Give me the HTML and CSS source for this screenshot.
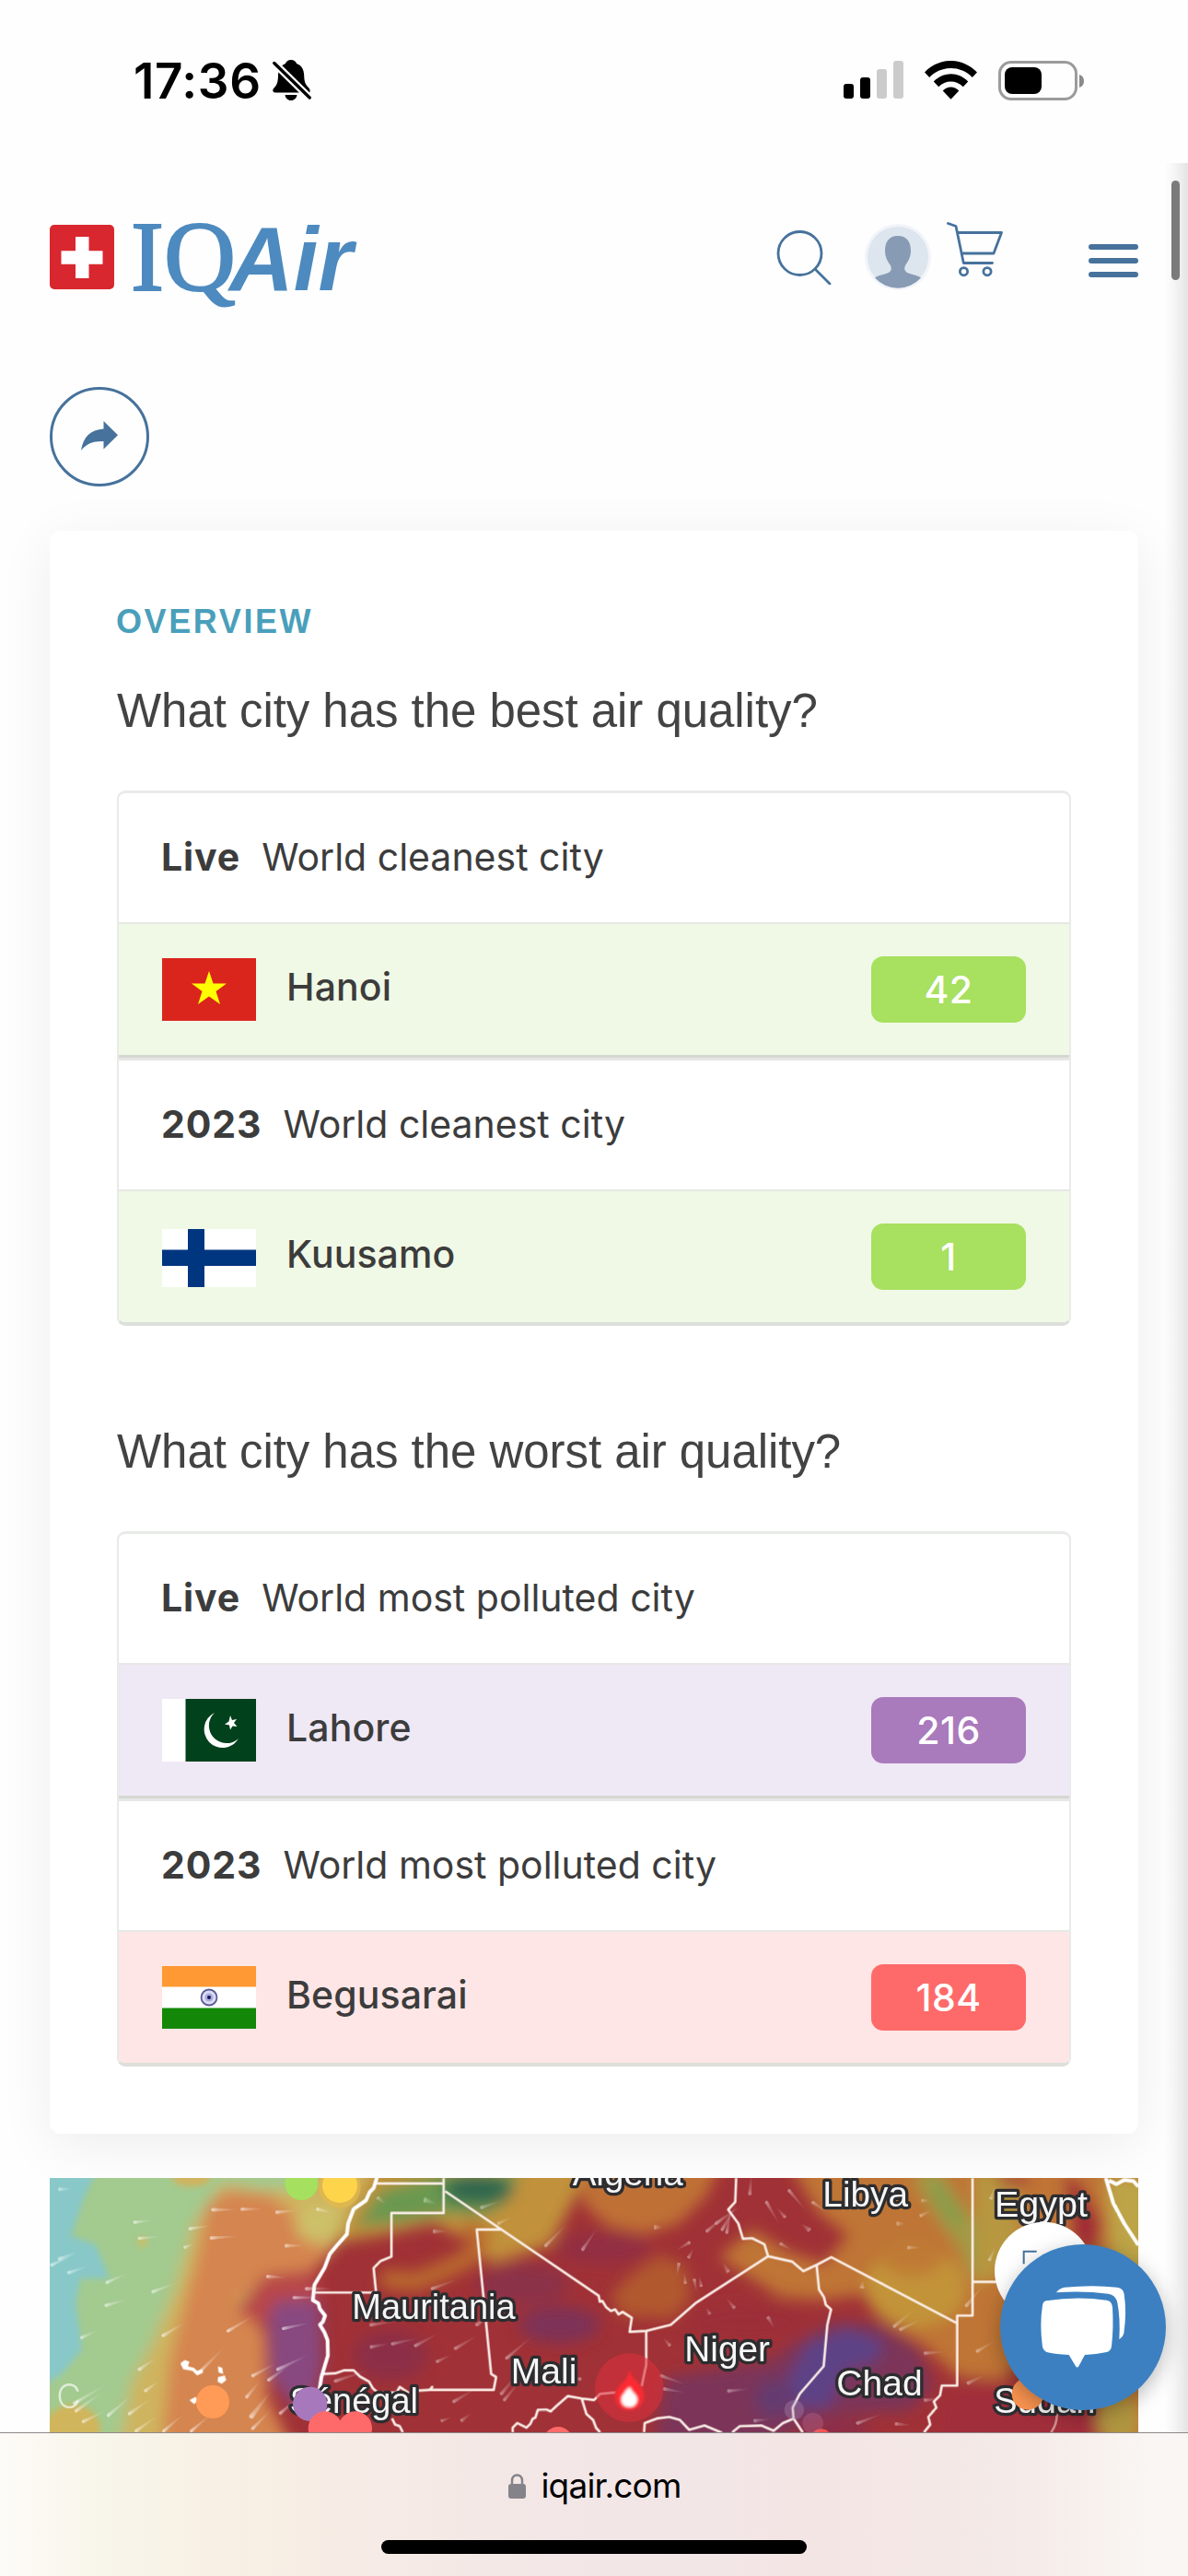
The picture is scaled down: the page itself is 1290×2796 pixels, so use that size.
FILE: index.html
```html
<!DOCTYPE html>
<html lang="en">
<head>
<meta charset="utf-8">
<title>IQAir</title>
<link rel="stylesheet" href="styles.css">
</head>
<body>
<div class="screen">
  <header class="status">
    <div class="status-left">
      <span class="clock">17:36</span>
      <svg class="bell" viewBox="0 0 42 44" width="42" height="44">
        <path d="M20 0c3.300 0 5.500 1.700 6 4 6 2 8 7 8.200 13 .2 8 2 10 4.800 13 1.600 1.800 2 3.500 1.200 5.500H3C0 35.500-.6 32.500 1.500 30.500 5 27 5.800 24 6 17c.2-6 2.500-11 8-13 .6-2.300 2.700-4 6-4zM13.500 38h13c-.4 3.600-3 6-6.500 6s-6.100-2.400-6.500-6z"/>
        <path d="M2 3.500 40 41" stroke="#fff" stroke-width="8"/>
        <path d="M1.800 3.500 40.200 41" stroke="#000" stroke-width="3.400" stroke-linecap="round"/>
      </svg>
    </div>
    <div class="status-right">
      <svg viewBox="0 0 65 42" width="65" height="42">
        <rect y="25" width="11" height="16" rx="3"/><rect x="18" y="18" width="11" height="23" rx="3"/>
        <rect x="36" y="9" width="11" height="32" rx="3" fill="#cbcbcb"/><rect x="54" width="11" height="41" rx="3" fill="#cbcbcb"/>
      </svg>
      <svg viewBox="0 0 57 42" width="57" height="42">
        <path d="M0 12.500C16-4.200 41-4.200 57 12.500L51.800 18C39 4.800 18 4.800 5.200 18z"/>
        <path d="M9.800 22.500C20 11.500 37 11.500 47.200 22.500L41.800 28.300C34.500 20.500 22.500 20.500 15.200 28.300z"/>
        <path d="M19.700 32.600C25 27.200 32 27.200 37.300 32.600L28.500 41.800z"/>
      </svg>
      <svg viewBox="0 0 94 43" width="94" height="43">
        <rect x="1.500" y="1.500" width="83" height="40" rx="12.500" fill="none" stroke="#9b9b9b" stroke-width="3"/>
        <rect x="7" y="7" width="40" height="29" rx="8"/>
        <path d="M88 15c3.300 1 5 3.500 5 7s-1.700 6-5 7z" fill="#8a8a8a"/>
      </svg>
    </div>
  </header>

  <nav class="nav">
    <svg class="logo" viewBox="0 0 340 100" width="340" height="100">
      <rect y="4" width="70" height="70" rx="5" fill="#d8272f"/>
      <path d="M28 17h14.500v15.300H57.500v14.400H42.500V62H28V46.700H12.500V32.300H28z" fill="#fff"/>
      <g fill="#4d8abf">
        <text class="logo-serif" x="88" y="75" textLength="114" lengthAdjust="spacingAndGlyphs">IQ</text>
        <text class="logo-sans" x="195" y="75" textLength="134" lengthAdjust="spacingAndGlyphs">Air</text>
      </g>
    </svg>
    <div class="nav-icons">
      <svg class="i-search" viewBox="0 0 60 60" width="60" height="60" fill="none" stroke="#46729c" stroke-width="2.800" stroke-linecap="round">
        <circle cx="25.500" cy="26" r="23.500"/><path d="M42 43 58 59"/>
      </svg>
      <svg class="i-user" viewBox="0 0 72 72" width="72" height="72">
        <circle cx="36" cy="36" r="36" fill="#f1f4f9"/><circle cx="36" cy="36" r="33" fill="#dde5ee"/>
        <path d="M36 13c9 0 14 6 14 16 0 7-3 12-6 16-2 5 0 7 3.500 8.500 6 2 9 2 13.500 5A33.500 33.500 0 0 1 11 58.500c4.500-3 7.500-3 13.500-5C28 52 30 50 28 45c-3-4-6-9-6-16 0-10 5-16 14-16z" fill="#879bb5"/>
      </svg>
      <svg class="i-cart" viewBox="0 0 62 62" width="62" height="62" fill="none" stroke="#46729c" stroke-width="2.800" stroke-linecap="round" stroke-linejoin="round">
        <path d="M1.500 2.500 10 5.500l8.300 40H49.500M12 12.500H59.500L51 35H16"/>
        <circle cx="18.500" cy="54.700" r="4.100"/><circle cx="44" cy="54.700" r="4.100"/>
      </svg>
      <svg class="i-menu" viewBox="0 0 54 36" width="54" height="36" fill="#46729c">
        <rect width="54" height="6" rx="3"/><rect y="15" width="54" height="6" rx="3"/><rect y="30" width="54" height="6" rx="3"/>
      </svg>
    </div>
  </nav>

  <div class="share-row">
    <div class="share">
      <svg viewBox="0 0 40 32" width="40" height="32"><path d="M24.500 0 40 15.200 24.500 30.500V22C14 21.500 6 24 0 32 2.500 17 10 9.500 24.500 8.500z" fill="#46729c"/></svg>
    </div>
  </div>

  <main class="card">
    <div class="eyebrow">OVERVIEW</div>
    <h2 class="q q-best">What city has the best air quality?</h2>
    <section class="table">
      <div class="head"><b>Live</b><span>World cleanest city</span></div>
      <div class="city good">
        <svg class="flag" viewBox="0 0 102 68" width="102" height="68"><rect width="102" height="68" fill="#da251d"/><path d="M51 14l4.500 13.500H70L58.500 36 63 50 51 41.500 39 50l4.500-14L32 27.500h14.500z" fill="#ff0"/></svg>
        <span class="name">Hanoi</span><span class="aqi">42</span>
      </div>
      <div class="rule"></div>
      <div class="head"><b>2023</b><span>World cleanest city</span></div>
      <div class="city good">
        <svg class="flag low" viewBox="0 0 102 63" width="102" height="63"><rect width="102" height="63" fill="#fff"/><path d="M28 0h18v63H28zM0 22.500h102v17.500H0z" fill="#003580"/></svg>
        <span class="name">Kuusamo</span><span class="aqi">1</span>
      </div>
    </section>
    <h2 class="q q-worst">What city has the worst air quality?</h2>
    <section class="table">
      <div class="head"><b>Live</b><span>World most polluted city</span></div>
      <div class="city very">
        <svg class="flag" viewBox="0 0 102 68" width="102" height="68"><rect width="102" height="68" fill="#fff"/><rect x="25.500" width="76.500" height="68" fill="#01411c"/><path d="M57 15A20 20 0 1 0 83 43 19 19 0 1 1 57 15z" fill="#fff"/><path d="M74 18l2 5 5-1-3 4 3.500 4-5-.5-2.500 4-1-5-5-1 4.500-3z" fill="#fff"/></svg>
        <span class="name">Lahore</span><span class="aqi">216</span>
      </div>
      <div class="rule"></div>
      <div class="head"><b>2023</b><span>World most polluted city</span></div>
      <div class="city bad">
        <svg class="flag" viewBox="0 0 102 68" width="102" height="68"><rect width="102" height="68" fill="#fff"/><rect width="102" height="22.500" fill="#f93"/><rect y="45.500" width="102" height="22.500" fill="#138808"/><circle cx="51" cy="34" r="8.500" fill="#dcdcf2" stroke="#5a5a98" stroke-width="1.800"/><circle cx="51" cy="34" r="4.500" fill="#a9a9dc"/><circle cx="51" cy="34" r="2" fill="#15155c"/></svg>
        <span class="name">Begusarai</span><span class="aqi">184</span>
      </div>
    </section>
  </main>

  <section class="map">
    <svg viewBox="0 42 3546 828" width="1182" height="276">
      <defs>
        <filter id="soft" x="-20%" y="-20%" width="140%" height="140%"><feGaussianBlur stdDeviation="24"/></filter>
        <filter id="edge" x="-20%" y="-20%" width="140%" height="140%"><feGaussianBlur stdDeviation="9"/></filter>
        <filter id="glow" x="-20%" y="-20%" width="140%" height="140%"><feGaussianBlur stdDeviation="4"/></filter>
        <linearGradient id="tail"><stop offset="0" stop-color="#fff" stop-opacity=".75"/><stop offset=".25" stop-color="#fff" stop-opacity=".4"/><stop offset="1" stop-color="#fff" stop-opacity="0"/></linearGradient>
        <path id="s" d="M0-5Q-8 0 0 6L90 1V-1z" fill="url(#tail)"/>
      </defs>
      <rect y="42" width="3546" height="828" fill="#a03136"/>
      <g filter="url(#soft)">
        <path d="M-60-20H1120L1000 180 900 300 850 350 680 380 610 470 700 560 700 780 800 940H-60z" fill="#cfb45f"/>
        <path d="M580 80 720 95 810 170 910 270 850 360 675 380 600 450 700 540 710 760 800 940H360L390 640 430 480 480 300 510 130z" fill="#d5854f"/>
        <path d="M-60-20H880L820 80 690 80 560 60 470 190 410 400 330 590 270 700 220 940H-60z" fill="#a3ca8f"/>
        <ellipse cx="880" cy="190" rx="80" ry="65" fill="#cdc069"/>
        <path d="M710 450 800 410 880 450 890 640 870 740 790 790 720 690z" fill="#884a80"/>
        <path d="M700 360 860 340 880 440 740 440 700 520 610 480z" fill="#b8464a"/>
        <path d="M920 255 1010 90 1060-20H1780L1700 130 1630 260 1540 290 1440 320 1370 250 1250 190 1100 225z" fill="#c1913a"/>
        <path d="M990 200 1080 80 1300 20H1530L1500 110 1420 165 1300 160 1120 190z" fill="#6a984f"/>
        <ellipse cx="1395" cy="80" rx="115" ry="50" fill="#33684e"/>
        <path d="M1080 370 1190 380 1290 340 1370 300 1400 240 1350 200" fill="none" stroke="#b9682f" stroke-width="62"/>
        <path d="M1720-20H2190L2140 100 2050 190 1940 225 1820 200 1740 130z" fill="#bf7034"/>
        <path d="M1900 350 1990 290 2070 330 2090 430 2030 500 1860 490 1830 420z" fill="#b1592f"/>
        <ellipse cx="1540" cy="390" rx="150" ry="65" fill="#8b304a"/>
        <ellipse cx="1660" cy="520" rx="130" ry="60" fill="#7e3256"/>
        <ellipse cx="1110" cy="620" rx="120" ry="80" fill="#8c2d47"/>
        <ellipse cx="1800" cy="270" rx="150" ry="50" fill="#922e42"/>
        <path d="M2180 300 2290 210 2400 280 2520 320 2600 230 2500 150 2400-20H3600V940H3440L3400 720 3240 600 3100 700 2960 690 2850 590 2720 510 2660 420 2520 440 2380 430z" fill="#bf7434"/>
        <ellipse cx="2820" cy="400" rx="165" ry="130" fill="#c29339"/>
        <ellipse cx="2810" cy="300" rx="100" ry="60" fill="#bf7a35"/>
        <path d="M2850 20 2930 150 3010 260 3040 350" fill="none" stroke="#a29a45" stroke-width="90"/>
        <path d="M2880 60 2960 190" fill="none" stroke="#869c4b" stroke-width="50"/>
        <path d="M3010 20H3160V300L3020 400z" fill="#b7973f"/>
        <path d="M3300 30 3360 60 3430 190 3400 300 3330 250 3320 130z" fill="#a22935"/>
        <ellipse cx="3140" cy="50" rx="55" ry="22" fill="#a83a34"/>
        <path d="M3440 40H3600V340H3460z" fill="#bda447"/>
        <path d="M2900 780 2990 710 3150 710 3330 680 3420 800 3400 940H2880z" fill="#a12f3a"/>
        <ellipse cx="3480" cy="830" rx="70" ry="90" fill="#b0963f"/>
        <path d="M2010 690 2200 660 2340 640 2440 570 2560 510 2700 520 2830 600 2880 720 2800 800 2500 820 2300 940H1960z" fill="#7b3458"/>
        <path d="M2400 700 2470 580 2600 530 2720 580 2690 640 2590 670 2540 790 2440 790z" fill="#5d4386"/>
        <ellipse cx="2360" cy="760" rx="60" ry="60" fill="#643a70"/>
        <ellipse cx="2550" cy="860" rx="130" ry="35" fill="#8c2f48"/>
        <ellipse cx="2270" cy="510" rx="200" ry="60" fill="#9c2d38"/>
      </g>
      <g filter="url(#edge)">
        <path d="M-60-20H170L110 110 70 230 150 260 195 370 100 370 85 450 105 600 40 680-60 740z" fill="#88c8c8"/>
        <ellipse cx="75" cy="860" rx="90" ry="80" fill="#d1b55c"/>
        <ellipse cx="462" cy="42" rx="62" ry="28" fill="#d1b35e"/>
        <circle cx="302" cy="250" r="16" fill="#c9bd65"/>
      </g>
      <g opacity=".85">
        <use href="#s" transform="translate(30 78) scale(.5 1)"/><use href="#s" transform="translate(275 186) rotate(-6) scale(.7 1)"/>
        <use href="#s" transform="translate(290 238) rotate(-4) scale(.8 1)"/><use href="#s" transform="translate(455 207) rotate(-8) scale(.8 1)"/>
        <use href="#s" transform="translate(438 268) rotate(-20) scale(.4 1)"/><use href="#s" transform="translate(530 145)"/>
        <use href="#s" transform="translate(625 143) scale(.8 1)"/><use href="#s" transform="translate(738 153) rotate(-5) scale(.8 1)"/>
        <use href="#s" transform="translate(870 142) rotate(15) scale(.6 1)"/><use href="#s" transform="translate(525 237) rotate(-3)"/>
        <use href="#s" transform="translate(768 262) scale(.7 1)"/><use href="#s" transform="translate(708 362) rotate(4) scale(.7 1)"/>
        <use href="#s" transform="translate(5 325) rotate(-25)"/><use href="#s" transform="translate(60 350) rotate(-18) scale(.8 1)"/>
        <use href="#s" transform="translate(30 305) rotate(-20) scale(.8 1)"/><use href="#s" transform="translate(185 382) rotate(-24) scale(.9 1)"/>
        <use href="#s" transform="translate(335 412) rotate(-20) scale(.9 1)"/><use href="#s" transform="translate(182 457) rotate(-16) scale(.9 1)"/>
        <use href="#s" transform="translate(102 562) rotate(-24) scale(.7 1)"/><use href="#s" transform="translate(368 555) rotate(-30)"/>
        <use href="#s" transform="translate(580 540) rotate(-30) scale(1.100 1)"/><use href="#s" transform="translate(290 666) rotate(-34) scale(.8 1)"/>
        <use href="#s" transform="translate(310 735) rotate(-35) scale(.7 1)"/><use href="#s" transform="translate(490 672) rotate(-45) scale(1.300 1)"/>
        <use href="#s" transform="translate(760 532) rotate(-12)"/><use href="#s" transform="translate(795 431)"/><use href="#s" transform="translate(835 402)"/>
        <use href="#s" transform="translate(660 686) rotate(-28)"/><use href="#s" transform="translate(742 665) rotate(-25) scale(1.300 1)"/>
        <use href="#s" transform="translate(712 700) rotate(-35)"/><use href="#s" transform="translate(640 756) rotate(-50) scale(.8 1)"/>
        <use href="#s" transform="translate(655 820) rotate(-52) scale(1.200 1.400)"/><use href="#s" transform="translate(750 808) rotate(-40)"/>
        <use href="#s" transform="translate(80 775) rotate(-30) scale(1.500 1)"/><use href="#s" transform="translate(85 800) rotate(-35) scale(1.300 1)"/>
        <use href="#s" transform="translate(190 815) rotate(-40) scale(1.200 1)"/><use href="#s" transform="translate(258 810) rotate(-35)"/>
        <use href="#s" transform="translate(108 835) rotate(-25)"/><use href="#s" transform="translate(280 866) rotate(-35)"/>
        <use href="#s" transform="translate(460 866) rotate(-40)"/><use href="#s" transform="translate(370 866) rotate(-40)"/><use href="#s" transform="translate(660 858) rotate(-45)"/>
      </g>
      <g opacity=".6">
        <use href="#s" transform="translate(1045 520) rotate(-8)"/><use href="#s" transform="translate(1045 592) rotate(-10) scale(.7 1)"/>
        <use href="#s" transform="translate(1115 582) rotate(-12)"/><use href="#s" transform="translate(1190 588) rotate(-28)"/>
        <use href="#s" transform="translate(930 703) rotate(-18) scale(1.300 1)"/><use href="#s" transform="translate(1320 597) rotate(-30)"/>
        <use href="#s" transform="translate(1260 640) rotate(-25) scale(.6 1)"/><use href="#s" transform="translate(1488 628) rotate(-40) scale(1.300 1)"/>
        <use href="#s" transform="translate(1315 770) rotate(-30)"/><use href="#s" transform="translate(1470 745) rotate(-50)"/><use href="#s" transform="translate(1480 765) rotate(-50)"/>
        <use href="#s" transform="translate(1275 833) rotate(-20) scale(.4 1)"/><use href="#s" transform="translate(1340 832) rotate(-35) scale(.5 1)"/>
        <use href="#s" transform="translate(1615 262) rotate(-45) scale(1.200 1)"/><use href="#s" transform="translate(1735 275) rotate(-55)"/>
        <use href="#s" transform="translate(1390 520) rotate(-35)"/><use href="#s" transform="translate(1245 402) rotate(-20)"/><use href="#s" transform="translate(1250 215) scale(.5 1.200)"/>
        <use href="#s" transform="translate(1220 112) rotate(20) scale(.5 1.500)"/><use href="#s" transform="translate(1405 138) rotate(-18) scale(.8 1)"/><use href="#s" transform="translate(1460 190) rotate(-25) scale(.6 1)"/>
        <use href="#s" transform="translate(1068 105) rotate(40) scale(.4 1)"/><use href="#s" transform="translate(1970 202) scale(.3 1.400)"/>
        <use href="#s" transform="translate(2205 220) rotate(-80)"/><use href="#s" transform="translate(2170 190) rotate(-35) scale(1.200 1)"/><use href="#s" transform="translate(2140 215) rotate(-40)"/>
        <use href="#s" transform="translate(2190 210) rotate(-60) scale(1.200 1)"/><use href="#s" transform="translate(2280 95) rotate(-85) scale(.8 1)"/>
        <use href="#s" transform="translate(2085 252) rotate(150) scale(.6 1)"/><use href="#s" transform="translate(2050 320) rotate(100) scale(.5 1)"/><use href="#s" transform="translate(2080 302) rotate(-60) scale(.4 1)"/>
        <use href="#s" transform="translate(2070 385) rotate(-95) scale(.4 1)"/><use href="#s" transform="translate(2100 372) rotate(80) scale(.5 1)"/><use href="#s" transform="translate(2122 395) rotate(-100) scale(.4 1)"/>
        <use href="#s" transform="translate(2210 348) rotate(-120) scale(.4 1.200)"/><use href="#s" transform="translate(2230 465) rotate(-130) scale(.5 1)"/><use href="#s" transform="translate(2150 485) rotate(-120) scale(.3 1)"/>
        <use href="#s" transform="translate(2340 495) rotate(60) scale(.5 1)"/><use href="#s" transform="translate(2020 588) rotate(-130) scale(.4 1)"/><use href="#s" transform="translate(1990 685) rotate(20)"/>
        <use href="#s" transform="translate(2000 728) rotate(10) scale(.8 1)"/><use href="#s" transform="translate(2210 735) rotate(-5) scale(.8 1)"/><use href="#s" transform="translate(1730 697) rotate(180) scale(.5 1)"/>
        <use href="#s" transform="translate(2335 120) rotate(60)"/><use href="#s" transform="translate(2408 82) rotate(50)"/><use href="#s" transform="translate(2485 120) rotate(35) scale(.7 1)"/><use href="#s" transform="translate(2395 170) rotate(-130) scale(.5 1)"/>
        <use href="#s" transform="translate(2475 213) rotate(-140) scale(.4 1.400)"/><use href="#s" transform="translate(2380 255) rotate(30) scale(.5 1)"/><use href="#s" transform="translate(2760 190) scale(.3 1.300)"/>
        <use href="#s" transform="translate(2835 165) rotate(-25) scale(.5 1)"/><use href="#s" transform="translate(2840 115) scale(.3 1)"/><use href="#s" transform="translate(2795 268) scale(.5 1)"/>
        <use href="#s" transform="translate(2750 525) rotate(-40)"/><use href="#s" transform="translate(2770 535) rotate(-25) scale(.9 1)"/><use href="#s" transform="translate(2645 400) rotate(-80) scale(.3 1.300)"/>
        <use href="#s" transform="translate(2850 612) rotate(-4) scale(.8 1)"/><use href="#s" transform="translate(3020 606) rotate(-30) scale(.8 1)"/><use href="#s" transform="translate(2990 710) rotate(-25) scale(.7 1)"/>
        <use href="#s" transform="translate(2985 458) rotate(-50)"/><use href="#s" transform="translate(3060 310) rotate(-65) scale(.6 1)"/><use href="#s" transform="translate(3065 110) rotate(-70) scale(.5 1)"/>
        <use href="#s" transform="translate(2630 840) rotate(-20)"/><use href="#s" transform="translate(2755 842) rotate(5) scale(.6 1)"/><use href="#s" transform="translate(2850 765) rotate(-5) scale(.6 1)"/><use href="#s" transform="translate(2295 832) rotate(-5) scale(.6 1)"/>
      </g>
      <g fill="none" stroke="#fbeee8" stroke-width="8" stroke-linejoin="round">
        <path d="M1065 60H1283M1283 42V156H1113V298L1078 312 1055 335 1063 415H865"/>
        <path d="M1288 85 1788 425 1792 445 1800 442 1812 462 1828 475 1842 470 1853 486 1866 478 1896 497 1889 543 1943 540 2023 520 2103 450 2340 297 2418 314 2455 345 2498 325 2546 300 2956 515V490H3006V42M3006 380H3100"/>
        <path d="M1473 210H1391L1438 680 1454 690 1446 732H1240L1200 734"/>
        <path d="M2236 42 2233 120 2210 145 2243 190 2258 240 2288 238 2328 258 2340 297"/>
        <path d="M1943 540V650L1928 720M1843 740 1793 745 1773 765 1733 760 1688 752 1650 785 1632 802 1618 796 1590 797 1582 822 1573 826 1566 842 1553 855 1523 840 1508 855V870M1733 760 1748 810 1770 830 1780 856 1793 870"/>
        <path d="M1936 870 1938 840 1978 825 2018 820 2053 830 2083 862 2133 848 2190 872M2223 870 2248 850 2318 848 2358 865 2388 840 2423 825"/>
        <path d="M2498 325 2506 405 2522 430 2528 455 2545 470 2533 520 2521 655 2443 745 2420 790 2423 825 2453 870M2956 515V718H2906L2900 750 2880 770 2888 790 2862 820 2868 845 2848 870"/>
        <path d="M888 680 930 678 960 668 990 668 1010 688 1040 705 1052 726 1070 742 1130 740 1140 722 1170 742M1115 825 1125 845 1140 850 1150 870M1238 732 1248 720"/>
        <path d="M3280 800Q3285 840 3262 870" opacity=".5"/>
      </g>
      <g fill="none" stroke="#fff" stroke-width="12" stroke-linejoin="round">
        <path d="M1066 40 1055 75 1042 88 1030 115 990 143 972 190 968 225 935 262 912 290 895 335 880 360 862 390 857 440 875 450 880 468 897 490 890 510 880 520 895 545 905 570 906 620 885 690 877 740"/>
        <path d="M3440 42 3465 125 3500 190 3546 260M3450 50 3475 62 3500 48 3530 52 3546 70"/>
      </g>
      <path d="M425 645 440 635 455 640 450 655 470 660 480 670 495 665 500 675 480 685 465 670 435 665zM548 655 562 660 565 680 550 675zM548 690 570 685 575 700 560 712 547 705zM455 765 475 755 485 765 470 778z" fill="#fff"/>
      <g class="dots">
        <circle cx="945" cy="72" r="68" fill="#e3b94c" opacity=".7"/>
        <circle cx="820" cy="60" r="54" fill="#a5e05f"/><circle cx="945" cy="66" r="57" fill="#fed44b"/>
        <circle cx="531" cy="771" r="54" fill="#ff9b57"/>
        <circle cx="1656" cy="900" r="48" fill="#fe6a69"/><circle cx="2513" cy="893" r="34" fill="#f7534f"/>
        <circle cx="2425" cy="797" r="32" fill="#a58bb8" opacity=".35"/><circle cx="2486" cy="840" r="34" fill="#c7789c" opacity=".3"/>
      </g>
      <g class="labels">
        <text x="985" y="500" textLength="532" lengthAdjust="spacingAndGlyphs">Mauritania</text>
        <text x="782" y="808" textLength="418" lengthAdjust="spacingAndGlyphs">Sénégal</text>
        <text x="1502" y="710" textLength="215" lengthAdjust="spacingAndGlyphs">Mali</text>
        <text x="2068" y="638" textLength="278" lengthAdjust="spacingAndGlyphs">Niger</text>
        <text x="1703" y="66" textLength="360" lengthAdjust="spacingAndGlyphs">Algeria</text>
        <text x="2518" y="135" textLength="278" lengthAdjust="spacingAndGlyphs">Libya</text>
        <text x="3078" y="168" textLength="303" lengthAdjust="spacingAndGlyphs">Egypt</text>
        <text x="2563" y="750" textLength="280" lengthAdjust="spacingAndGlyphs">Chad</text>
        <text x="3076" y="808" textLength="330" lengthAdjust="spacingAndGlyphs">Sudan</text>
      </g>
      <text class="faint" x="22" y="792">C</text>
      <circle cx="848" cy="778" r="56" fill="#a878bd"/>
      <circle cx="897" cy="857" r="55" fill="#fe6a69"/><circle cx="995" cy="857" r="55" fill="#fe6a69"/>
      <circle cx="3186" cy="745" r="52" fill="#fa9450"/>
      <circle cx="1888" cy="725" r="112" fill="#d8303c" opacity=".6"/>
      <g filter="url(#glow)">
        <path d="M1888 665C1896 700 1937 715 1935 752 1932 785 1912 798 1888 798S1844 785 1842 752C1842 730 1858 722 1862 712 1872 705 1884 695 1888 665z" fill="#fb2b33"/>
        <path d="M1890 722C1894 740 1915 745 1914 765 1912 780 1903 788 1888 788S1862 780 1862 763C1862 750 1872 745 1876 735z" fill="#fff"/>
      </g>
      <circle cx="3238" cy="345" r="160" fill="#fff"/>
      <path d="M3173 322V281H3215" fill="none" stroke="#46729c" stroke-width="6"/>
    </svg>
  </section>

  <footer class="browser">
    <div class="address">
      <svg viewBox="0 0 19 27" width="19" height="27"><path d="M4 12V7.500C4 4 6.200 1.500 9.500 1.500S15 4 15 7.500V12" fill="none" stroke="#85838a" stroke-width="2.500"/><rect y="11" width="19" height="16" rx="3" fill="#85838a"/></svg>
      <span>iqair.com</span>
    </div>
    <div class="home"></div>
  </footer>

  <div class="edge"></div>
  <div class="scroll"></div>
  <div class="chat">
    <svg viewBox="738 258 540 540" width="180" height="180">
      <path d="M888 442Q988 426 1085 440 1102 443 1104 462 1108 530 1101 590 1099 605 1085 609 1050 616 1014 618L994 655Q989 662 984 655L962 618Q920 616 893 610 879 606 876 592 866 520 876 457 878 444 888 442z" fill="#fff"/>
      <path d="M921 415Q930 401 948 398 1040 389 1118 398 1140 401 1142 420 1151 480 1141 548 1138 560 1126 568 1130 500 1120 448 1115 423 1090 419 1010 409 921 415z" fill="#fff"/>
    </svg>
  </div>
</div>
</body>
</html>
```
FILE: styles.css
```css
* { box-sizing: border-box; }
body { margin: 0; background: #fdfdfd; }
svg { display: block; flex: none; }

.screen {
  position: relative;
  width: 1290px;
  height: 2796px;
  overflow: hidden;
  display: flex;
  flex-direction: column;
  background: #fefefe;
  font-family: Inter, "Liberation Sans", sans-serif;
  color: #3c3c3c;
}

/* status bar */
.status {
  height: 177px;
  flex: none;
  display: flex;
  justify-content: space-between;
  align-items: flex-start;
  padding: 65px 112px 0 145px;
}
.status-left { display: flex; align-items: flex-start; gap: 12px; }
.clock { width: 139px; font-size: 53px; font-weight: 600; line-height: 46px; letter-spacing: .6px; color: #000; white-space: nowrap; }
.status-right { display: flex; gap: 23px; padding-top: 1px; }

/* site navigation */
.nav {
  height: 243px;
  flex: none;
  display: flex;
  justify-content: space-between;
  align-items: flex-start;
  padding: 63px 54px 0;
}
.logo { overflow: visible; }
.logo-serif { font-family: "Liberation Serif", serif; font-size: 109px; stroke: #4d8abf; stroke-width: 2px; }
.logo-sans { font-family: "Liberation Sans", sans-serif; font-size: 99px; font-weight: 700; font-style: italic; }
.nav-icons { display: flex; align-items: flex-start; }
.i-search { margin: 9px 36px 0 0; }
.i-user { margin: 3px 17px 0 0; }
.i-cart { margin-right: 92px; }
.i-menu { margin-top: 25px; }

.share-row { height: 156px; flex: none; padding: 0 54px; }
.share {
  width: 108px;
  height: 108px;
  padding-bottom: 3px;
  border: 3px solid #46729c;
  border-radius: 50%;
  display: flex;
  align-items: center;
  justify-content: center;
}

/* overview card */
.card {
  height: 1740px;
  flex: none;
  margin: 0 54px;
  padding: 79px 73px 0;
  background: #fff;
  border-radius: 12px;
  box-shadow: 0 12px 60px rgba(0, 0, 0, .07);
}
.eyebrow {
  height: 40px;
  margin-left: -1px;
  font: 700 36px/40px "Liberation Sans", sans-serif;
  letter-spacing: 2.6px;
  color: #4a9fbb;
}
.q {
  height: 60px;
  font: 400 51px/60px "Liberation Sans", sans-serif;
  letter-spacing: -.05px;
  color: #434343;
  white-space: nowrap;
}
.q-best { margin: 47px 0 56px; }
.q-worst { margin: 107px 0 56px; }

.table {
  width: 1036px;
  border: 2px solid #e9ebe8;
  border-top-width: 3px;
  border-bottom: 4px solid #dddfdb;
  border-radius: 9px;
  overflow: hidden;
}
.head {
  height: 140px;
  padding: 0 46px 3px;
  display: flex;
  align-items: center;
  gap: 23px;
  font-size: 41px;
  line-height: 50px;
}
.head b { font-weight: 700; letter-spacing: .9px; }
.head span { letter-spacing: 0; }
.city {
  height: 144px;
  border-top: 2px solid #e6e8e4;
  padding: 0 47px;
  display: flex;
  align-items: center;
}
.low { position: relative; top: 1px; }
.name { margin: -6px 0 0 33px; flex: 1; font-size: 41px; font-weight: 500; letter-spacing: .1px; }
.aqi {
  width: 168px;
  height: 72px;
  border-radius: 13px;
  font-size: 41px;
  line-height: 73px;
  font-weight: 450;
  letter-spacing: .4px;
  text-align: center;
  color: #fff;
}
.good { background: #f0f9e5; }
.good .aqi { background: #a8e05f; }
.very { background: #efe8f5; }
.very .aqi { background: #a97abc; }
.bad { background: #fee6e6; }
.bad .aqi { background: #fe6a69; }
.rule { height: 6px; border-top: 3px solid #d5d8d2; background: #e6e6e6; }

/* map */
.map { height: 276px; flex: none; margin: 48px 54px 0; overflow: hidden; }
.labels text {
  font: 400 115px "Liberation Sans", sans-serif;
  fill: #f6f6f6;
  stroke: #2d2d30;
  stroke-width: 20px;
  stroke-linejoin: round;
  paint-order: stroke;
}
.faint { font: 300 110px Inter, sans-serif; fill: #fff; opacity: .65; }

/* browser bar */
.browser {
  position: relative;
  height: 156px;
  flex: none;
  border-top: 1px solid #8d8889;
  background: linear-gradient(90deg, #fdfbf7 0, #f8f5ea 110px, #f8efe4 260px, #f5e9e6 480px, #f2e6e7 640px, #f3e5e4 900px, #f4eae7 1100px, #faf6f3 1250px);
  display: flex;
  flex-direction: column;
  align-items: center;
}
.address { display: flex; align-items: flex-start; gap: 16px; padding: 44px 0 0 2px; font-size: 37px; line-height: 26px; letter-spacing: -.8px; color: #000; }
.home { margin-top: 45px; width: 462px; height: 15px; border-radius: 8px; background: #000; }

/* overlays */
.edge { position: absolute; top: 177px; right: 0; width: 26px; height: 2463px; background: linear-gradient(90deg, rgba(0, 0, 0, 0), rgba(0, 0, 0, .03) 40%, rgba(0, 0, 0, .1)); }
.scroll { position: absolute; top: 196px; left: 1272px; width: 9px; height: 108px; border-radius: 5px; background: #7b7b7b; }
.chat { position: absolute; left: 1086px; top: 2436px; width: 180px; height: 180px; border-radius: 50%; background: #3c80c1; box-shadow: 0 6px 22px rgba(0, 0, 0, .28); }
```
